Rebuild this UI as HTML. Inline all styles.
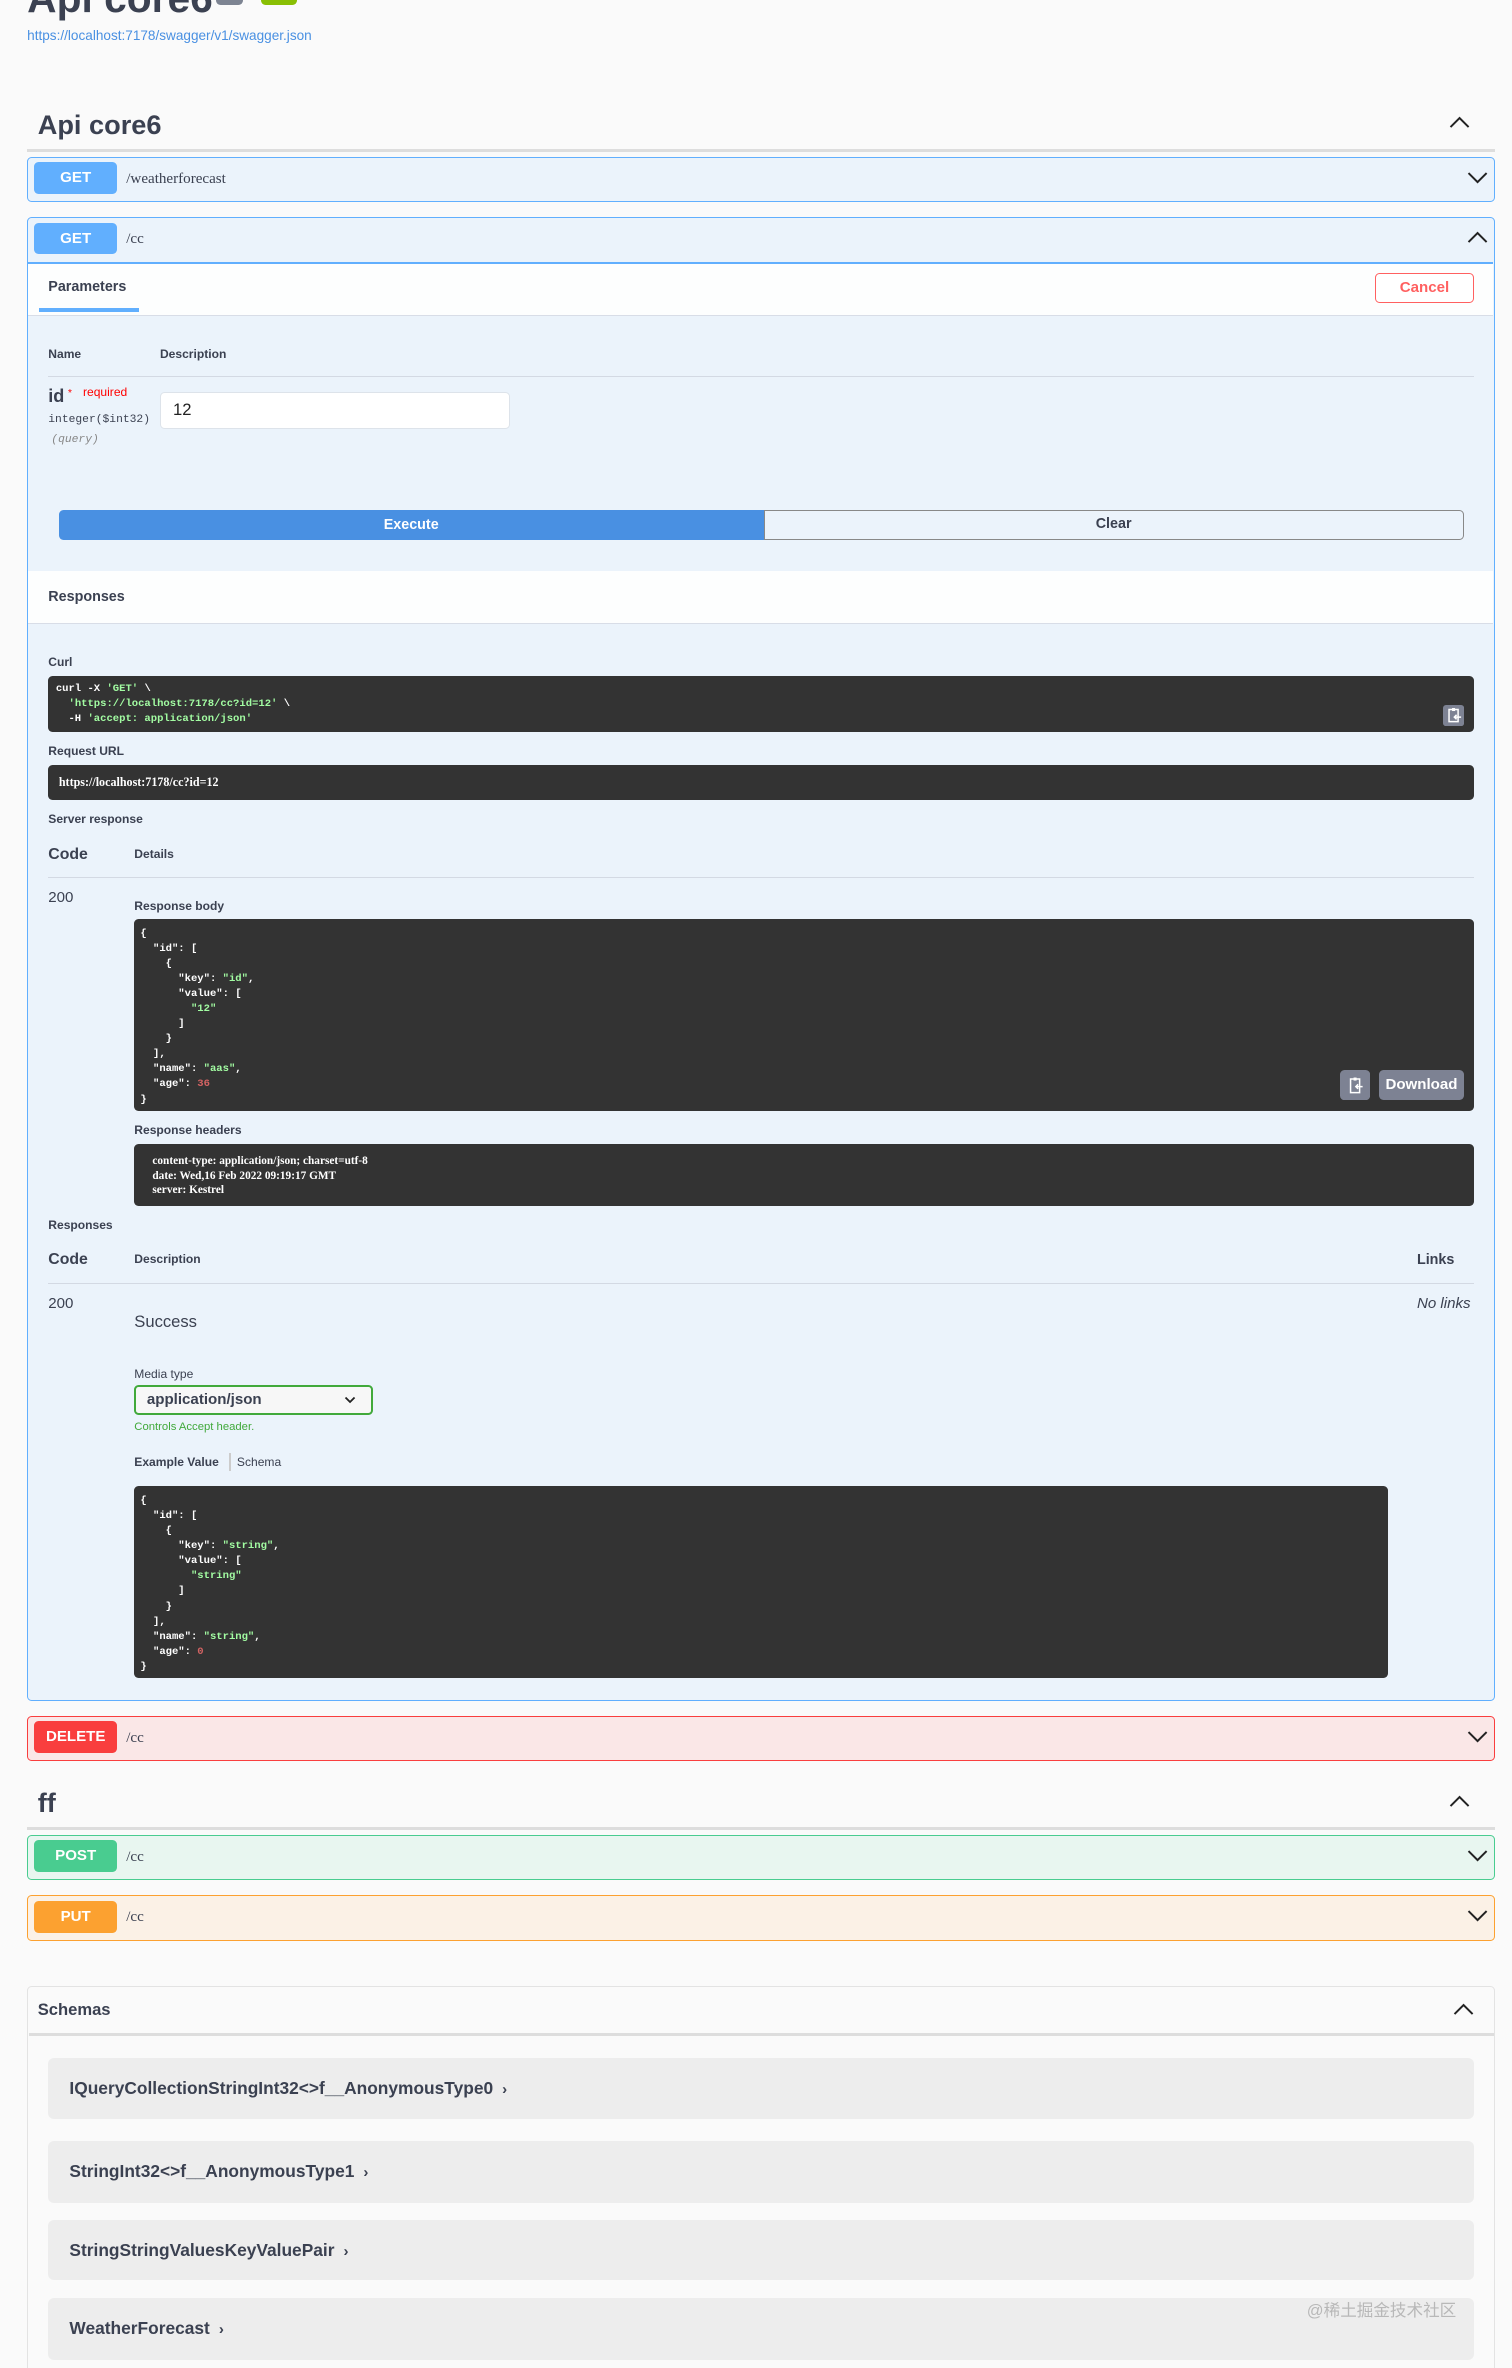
<!DOCTYPE html>
<html><head><meta charset="utf-8">
<style>
*{box-sizing:border-box}
html,body{margin:0;padding:0;background:#fafafa;overflow:hidden}
#w{position:relative;width:1002px;height:1569px;zoom:1.509;font-family:"Liberation Sans","Noto Sans CJK SC",sans-serif;color:#3b4151;overflow:hidden}
.a{position:absolute;white-space:pre}
.mono{font-family:"Liberation Mono","DejaVu Sans Mono",monospace}
.ob{position:absolute;left:18px;width:973px;border:1px solid;border-radius:3px}
.badge{position:absolute;left:4px;top:3px;width:55px;height:21px;border-radius:3px;color:#fff;font-weight:bold;font-size:10px;text-align:center;line-height:21px}
.path{position:absolute;left:65px;top:0;line-height:28px;font-size:10px;font-family:"Liberation Serif","DejaVu Serif",serif;color:#3b4151}
.chev{position:absolute;right:4px;top:8px}
.dark{position:absolute;background:#333;border-radius:3px;color:#fff;font-family:"Liberation Mono",monospace;font-weight:bold;font-size:7px;line-height:10px;white-space:pre}
.g{color:#a2fca2}.r{color:#d36363}
.lbl{position:absolute;font-size:8px;font-weight:bold;white-space:pre}
.sc{position:absolute;left:32px;width:945px;background:#ededed;border-radius:4px;font-size:11.5px;font-weight:bold;color:#3b4151}
</style></head><body>
<div id="w">
<div class="a" style="left:18px;top:-16px;font-size:27px;font-weight:bold;color:#3b4151;line-height:30px">Api core6</div>
<div class="a" style="left:143px;top:-4px;width:18px;height:7px;background:#7d8492;border-radius:3px"></div>
<div class="a" style="left:173px;top:-4px;width:24px;height:7px;background:#89bf04;border-radius:3px"></div>
<div class="a" style="left:18px;top:18px;font-size:9px;color:#4990e2;line-height:12px">https://localhost:7178/swagger/v1/swagger.json</div>

<div class="a" style="left:25px;top:71px;font-size:18px;font-weight:bold;line-height:24px">Api core6</div>
<svg class="a" style="left:960px;top:76px" width="14" height="10" viewBox="0 0 14 10"><path d="M1 8L7 2L13 8" fill="none" stroke="#222" stroke-width="1.3"/></svg>
<div class="a" style="left:18px;top:99px;width:973px;height:2px;background:#ddd"></div>

<div class="ob" style="top:104px;height:30px;background:#ebf3fb;border-color:#61affe">
<div class="badge" style="background:#61affe">GET</div><div class="path">/weatherforecast</div>
<svg class="chev" width="14" height="10" viewBox="0 0 14 10"><path d="M1 2L7 8L13 2" fill="none" stroke="#222" stroke-width="1.3"/></svg></div>

<div class="ob" style="top:144px;height:983px;background:#ebf3fb;border-color:#61affe">
<div class="badge" style="background:#61affe">GET</div><div class="path">/cc</div>
<svg class="chev" width="14" height="10" viewBox="0 0 14 10"><path d="M1 8L7 2L13 8" fill="none" stroke="#222" stroke-width="1.3"/></svg>
<div class="a" style="left:0;top:29px;width:971px;height:1px;background:#61affe"></div>
<div class="a" style="left:0;top:30px;width:971px;height:35px;background:#fdfefe;border-bottom:1px solid #d8dde7"></div>
<div class="a" style="left:0;top:234px;width:971px;height:35px;background:#fdfefe;border-bottom:1px solid #d8dde7"></div>
</div>

<div class="lbl" style="left:32px;top:185px;font-size:9.5px">Parameters</div>
<div class="a" style="left:26px;top:204px;width:66px;height:3px;background:#61affe"></div>
<div class="a" style="left:911px;top:181px;width:66px;height:20px;border:1px solid #ff6060;border-radius:3px;color:#ff6060;font-weight:bold;font-size:10px;text-align:center;line-height:18px;background:#fff">Cancel</div>

<div class="lbl" style="left:32px;top:230px">Name</div>
<div class="lbl" style="left:106px;top:230px">Description</div>
<div class="a" style="left:32px;top:249px;width:945px;height:1px;background:#d3d9e3"></div>
<div class="a" style="left:32px;top:256px;font-size:12px;font-weight:bold;line-height:14px">id</div>
<div class="a" style="left:45px;top:256px;font-size:7px;color:red;line-height:10px">*</div>
<div class="a" style="left:55px;top:255px;font-size:8px;color:red;line-height:10px">required</div>
<div class="a" style="left:32px;top:274px;font-size:7.5px;line-height:10px;font-family:'Liberation Mono',monospace">integer($int32)</div>
<div class="a" style="left:34px;top:287px;font-size:7.5px;line-height:10px;font-style:italic;color:#888;font-family:'Liberation Mono',monospace">(query)</div>
<div class="a" style="left:106px;top:260px;width:232px;height:24px;background:#fff;border:1px solid #dde3ea;border-radius:3px;font-size:11px;line-height:22px;padding-left:8px;color:#222">12</div>

<div class="a" style="left:39px;top:338px;width:467px;height:20px;background:#4990e2;border-radius:3px 0 0 3px;color:#fff;font-weight:bold;font-size:9.5px;text-align:center;line-height:20px">Execute</div>
<div class="a" style="left:506px;top:338px;width:464px;height:20px;border:1px solid #888;border-radius:0 3px 3px 0;font-weight:bold;font-size:9.5px;text-align:center;line-height:18px">Clear</div>

<div class="lbl" style="left:32px;top:390px;font-size:9.5px">Responses</div>

<div class="lbl" style="left:32px;top:434px">Curl</div>
<div class="dark" style="left:32px;top:448px;width:945px;height:37px;padding:4px 5px">curl -X <span class="g">'GET'</span> \
  <span class="g">'https://localhost:7178/cc?id=12'</span> \
  -H <span class="g">'accept: application/json'</span></div>
<svg class="a" style="left:956px;top:467px" width="14" height="14" viewBox="0 0 14 14"><rect width="14" height="14" rx="2" fill="#7d8293"/><path d="M4 3h6v8H4z" fill="none" stroke="#fff" stroke-width="1"/><path d="M6 2h2v2H6z" fill="#fff"/><path d="M12 8H8M9 6.5L7.5 8L9 9.5" stroke="#fff" fill="none"/></svg>
<div class="lbl" style="left:32px;top:493px">Request URL</div>
<div class="dark" style="left:32px;top:507px;width:945px;height:23px;padding-left:7px;line-height:23px;font-family:'Liberation Serif',serif;font-size:8px">https://localhost:7178/cc?id=12</div>
<div class="lbl" style="left:32px;top:538px">Server response</div>
<div class="a" style="left:32px;top:559px;font-size:10.5px;font-weight:bold;line-height:14px">Code</div>
<div class="lbl" style="left:89px;top:561px">Details</div>
<div class="a" style="left:32px;top:581px;width:945px;height:1px;background:#d3d9e3"></div>
<div class="a" style="left:32px;top:589px;font-size:10px;line-height:12px">200</div>
<div class="lbl" style="left:89px;top:596px">Response body</div>
<div class="dark" style="left:89px;top:609px;width:888px;height:127px;padding:5px 4px">{
  "id": [
    {
      "key": <span class="g">"id"</span>,
      "value": [
        <span class="g">"12"</span>
      ]
    }
  ],
  "name": <span class="g">"aas"</span>,
  "age": <span class="r">36</span>
}</div>
<svg class="a" style="left:888px;top:709px" width="20" height="20" viewBox="0 0 20 20"><rect width="20" height="20" rx="3" fill="#7d8293"/><path d="M7 6h6v9H7z" fill="none" stroke="#fff" stroke-width="1"/><path d="M9 5h2v2H9z" fill="#fff"/><path d="M15 11h-4M12 9.5L10.5 11L12 12.5" stroke="#fff" fill="none"/></svg>
<div class="a" style="left:914px;top:709px;width:56px;height:20px;background:#7d8293;border-radius:3px;color:#fff;font-weight:bold;font-size:10px;text-align:center;line-height:20px">Download</div>
<div class="lbl" style="left:89px;top:744px">Response headers</div>
<div class="dark" style="left:89px;top:758px;width:888px;height:41px;padding:7px 12px;font-family:'Liberation Serif',serif;font-size:7.5px;line-height:9.5px">content-type: application/json; charset=utf-8
date: Wed,16 Feb 2022 09:19:17 GMT
server: Kestrel</div>

<div class="lbl" style="left:32px;top:807px">Responses</div>
<div class="a" style="left:32px;top:828px;font-size:10.5px;font-weight:bold;line-height:14px">Code</div>
<div class="lbl" style="left:89px;top:830px">Description</div>
<div class="a" style="left:939px;top:829px;font-size:9.5px;font-weight:bold;line-height:12px">Links</div>
<div class="a" style="left:32px;top:850px;width:945px;height:1px;background:#d3d9e3"></div>
<div class="a" style="left:32px;top:858px;font-size:10px;line-height:12px">200</div>
<div class="a" style="left:939px;top:858px;font-size:10px;line-height:12px;font-style:italic">No links</div>
<div class="a" style="left:89px;top:869px;font-size:11px;line-height:14px">Success</div>
<div class="a" style="left:89px;top:906px;font-size:8px;line-height:10px">Media type</div>
<div class="a" style="left:89px;top:918px;width:158px;height:20px;border:1.5px solid #41a93b;border-radius:3px;font-weight:bold;font-size:10px;line-height:17px;padding-left:7px;background:#f7f7f7">application/json</div>
<svg class="a" style="left:228px;top:925px" width="8" height="6" viewBox="0 0 8 6"><path d="M1 1L4 4L7 1" fill="none" stroke="#222" stroke-width="1.2"/></svg>
<div class="a" style="left:89px;top:941px;font-size:7.5px;color:#41a93b;line-height:10px">Controls Accept header.</div>
<div class="lbl" style="left:89px;top:964px">Example Value</div>
<div class="a" style="left:152px;top:963px;width:1px;height:12px;background:#ccc"></div>
<div class="a" style="left:157px;top:964px;font-size:8px;line-height:10px">Schema</div>
<div class="dark" style="left:89px;top:985px;width:831px;height:127px;padding:5px 4px">{
  "id": [
    {
      "key": <span class="g">"string"</span>,
      "value": [
        <span class="g">"string"</span>
      ]
    }
  ],
  "name": <span class="g">"string"</span>,
  "age": <span class="r">0</span>
}</div>

<div class="ob" style="top:1137px;height:30px;background:#fae7e7;border-color:#f93e3e">
<div class="badge" style="background:#f93e3e">DELETE</div><div class="path">/cc</div>
<svg class="chev" width="14" height="10" viewBox="0 0 14 10"><path d="M1 2L7 8L13 2" fill="none" stroke="#222" stroke-width="1.3"/></svg></div>

<div class="a" style="left:25px;top:1183px;font-size:18px;font-weight:bold;line-height:24px">ff</div>
<svg class="a" style="left:960px;top:1189px" width="14" height="10" viewBox="0 0 14 10"><path d="M1 8L7 2L13 8" fill="none" stroke="#222" stroke-width="1.3"/></svg>
<div class="a" style="left:18px;top:1211px;width:973px;height:2px;background:#ddd"></div>

<div class="ob" style="top:1216px;height:30px;background:#e8f6f0;border-color:#49cc90">
<div class="badge" style="background:#49cc90">POST</div><div class="path">/cc</div>
<svg class="chev" width="14" height="10" viewBox="0 0 14 10"><path d="M1 2L7 8L13 2" fill="none" stroke="#222" stroke-width="1.3"/></svg></div>
<div class="ob" style="top:1256px;height:30px;background:#fbf1e6;border-color:#fca130">
<div class="badge" style="background:#fca130">PUT</div><div class="path">/cc</div>
<svg class="chev" width="14" height="10" viewBox="0 0 14 10"><path d="M1 2L7 8L13 2" fill="none" stroke="#222" stroke-width="1.3"/></svg></div>

<div class="a" style="left:18px;top:1316px;width:973px;height:260px;border:1px solid #e3e3e3;border-radius:3px;background:#fafafa"></div>
<div class="a" style="left:25px;top:1325px;font-size:11px;font-weight:bold;line-height:14px">Schemas</div>
<svg class="a" style="left:963px;top:1327px" width="14" height="10" viewBox="0 0 14 10"><path d="M1 8L7 2L13 8" fill="none" stroke="#222" stroke-width="1.3"/></svg>
<div class="a" style="left:19px;top:1347px;width:971px;height:2px;background:#ddd"></div>
<div class="sc" style="top:1364px;height:40px;line-height:40px;padding-left:14px">IQueryCollectionStringInt32&lt;&gt;f__AnonymousType0 <span style="font-size:10px">&nbsp;›</span></div>
<div class="sc" style="top:1419px;height:41px;line-height:41px;padding-left:14px">StringInt32&lt;&gt;f__AnonymousType1 <span style="font-size:10px">&nbsp;›</span></div>
<div class="sc" style="top:1471px;height:40px;line-height:40px;padding-left:14px">StringStringValuesKeyValuePair <span style="font-size:10px">&nbsp;›</span></div>
<div class="sc" style="top:1523px;height:41px;line-height:41px;padding-left:14px">WeatherForecast <span style="font-size:10px">&nbsp;›</span></div>
<div class="a" style="left:866px;top:1524px;font-size:11px;color:#b8b8b8;line-height:14px">@稀土掘金技术社区</div>
</div>
</body></html>
